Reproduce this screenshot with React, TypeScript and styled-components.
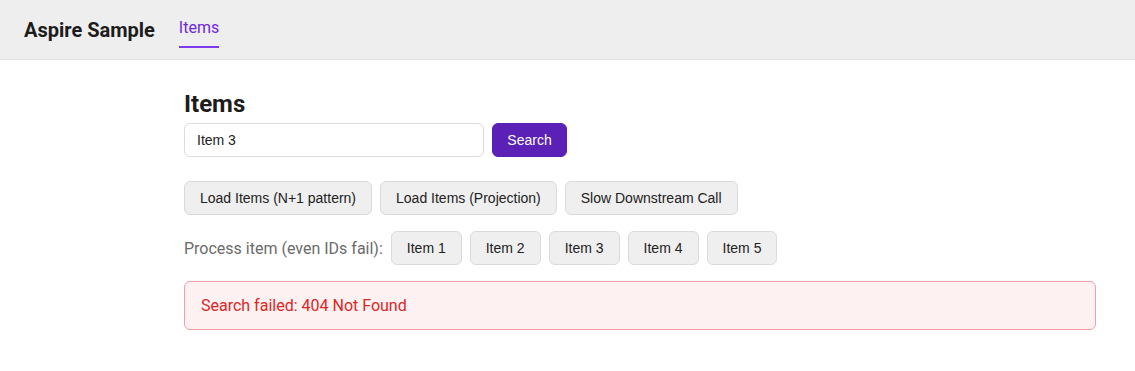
import React, { useState } from "react";
import styled, { createGlobalStyle } from "styled-components";

const GlobalStyle = createGlobalStyle`
  body {
    margin: 0;
    background: #fff;
    font-family: Roboto, "Liberation Sans", sans-serif;
    color: #1f1f1f;
  }
`;

const ITEM_IDS = [1, 2, 3, 4, 5];

const App: React.FC = () => {
  const [query, setQuery] = useState("Item 3");

  return (
    <>
      <GlobalStyle />
      <Header>
        <Brand>Aspire Sample</Brand>
        <NavLink href="#" active>
          Items
        </NavLink>
      </Header>

      <Main>
        <Content>
          <Title>Items</Title>
          <SearchRow>
            <SearchInput
              value={query}
              onChange={(e) => setQuery(e.target.value)}
            />
            <PrimaryButton>Search</PrimaryButton>
          </SearchRow>

          <ButtonRow>
            <Button>Load Items (N+1 pattern)</Button>
            <Button>Load Items (Projection)</Button>
            <Button>Slow Downstream Call</Button>
          </ButtonRow>

          <ButtonRow>
            <RowLabel>Process item (even IDs fail):</RowLabel>
            {ITEM_IDS.map((id) => (
              <Button key={id}>Item {id}</Button>
            ))}
          </ButtonRow>

          <ErrorBox>Search failed: 404 Not Found</ErrorBox>
        </Content>
      </Main>
    </>
  );
};

const Header = styled.header`
  display: flex;
  align-items: center;
  gap: 24px;
  height: 59px;
  padding: 0 24px;
  background: #eeeeee;
  border-bottom: 1px solid #e0e0e0;
`;

const Brand = styled.div`
  font-size: 20px;
  font-weight: 700;
  color: #1c1c1c;
`;

const NavLink = styled.a<{ active?: boolean }>`
  display: block;
  padding: 6px 0 8px;
  line-height: 20px;
  font-size: 16px;
  text-decoration: none;
  color: ${(p) => (p.active ? "#6d28d9" : "#444")};
  border-bottom: 2px solid ${(p) => (p.active ? "#7c3aed" : "transparent")};
`;

const Main = styled.main`
  padding: 30px 0 0 184px;
`;

const Content = styled.div`
  width: 912px;
  display: flex;
  flex-direction: column;
`;

const Title = styled.h2`
  margin: 0 0 5px;
  font-size: 24px;
  line-height: 28px;
  font-weight: 700;
  color: #1c1c1c;
`;

const SearchRow = styled.div`
  display: flex;
  gap: 8px;
`;

const SearchInput = styled.input`
  box-sizing: border-box;
  width: 300px;
  height: 34px;
  padding: 0 12px;
  border: 1px solid #dcdcdc;
  border-radius: 6px;
  font-family: "Liberation Sans", Arial, sans-serif;
  font-size: 14px;
  color: #222;
  outline: none;
`;

const Button = styled.button`
  box-sizing: border-box;
  height: 34px;
  padding: 0 15px;
  border: 1px solid #dadada;
  border-radius: 6px;
  background: #efefef;
  font-family: "Liberation Sans", Arial, sans-serif;
  font-size: 14px;
  color: #222;
  cursor: pointer;
`;

const PrimaryButton = styled(Button)`
  width: 75px;
  padding: 0;
  border-color: #5b21b6;
  background: #5b21b6;
  color: #fff;
`;

const ButtonRow = styled.div`
  display: flex;
  align-items: center;
  gap: 8px;
  margin-top: 24px;

  & + & {
    margin-top: 16px;
  }
`;

const RowLabel = styled.span`
  font-size: 16px;
  color: #6b6b6b;
`;

const ErrorBox = styled.div`
  margin-top: 16px;
  padding: 14px 16px;
  line-height: 19px;
  font-size: 16px;
  color: #dc2626;
  background: #fef1f1;
  border: 1px solid #eea2a8;
  border-radius: 6px;
`;

export default App;
